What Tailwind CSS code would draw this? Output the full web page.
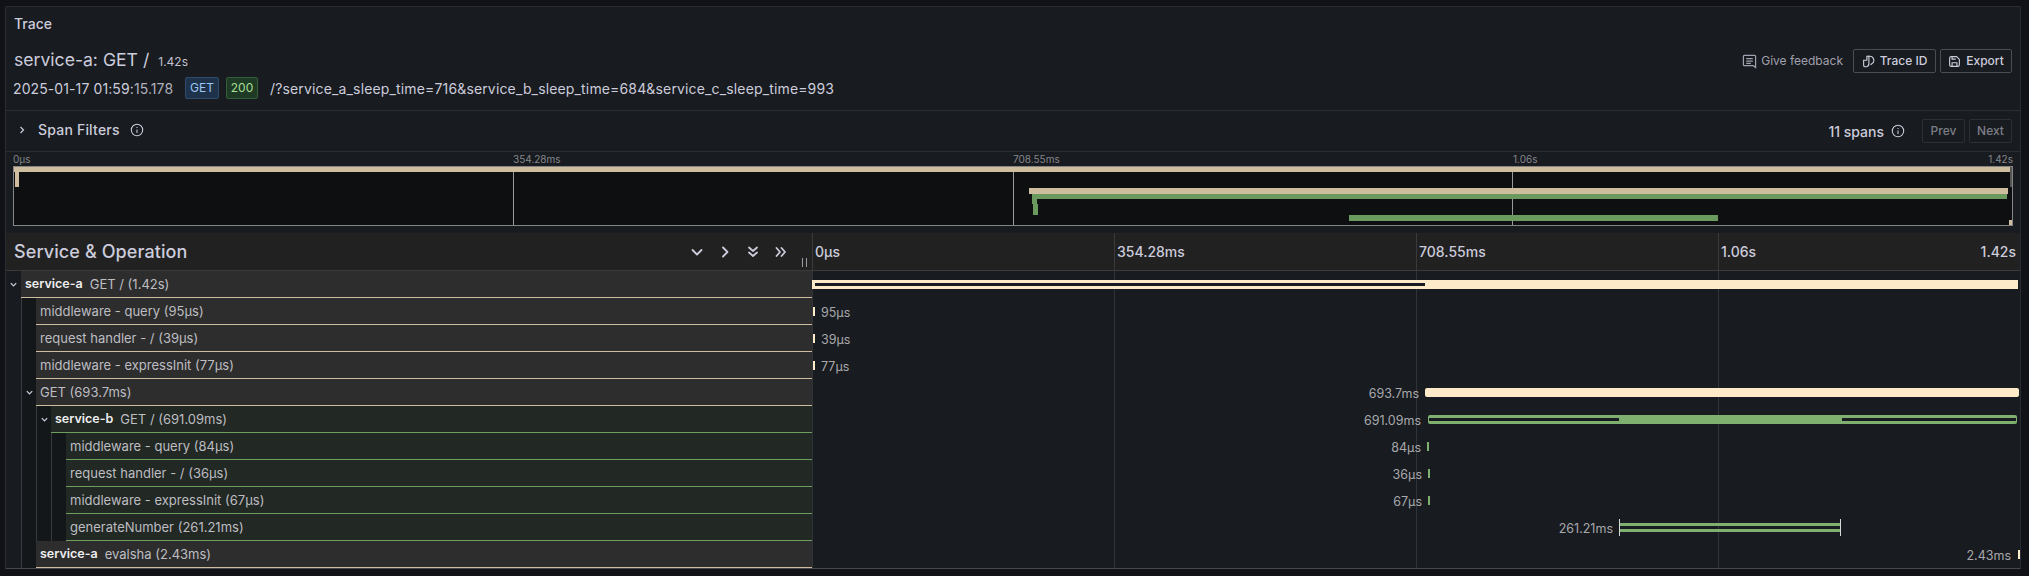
<!DOCTYPE html>
<html><head><meta charset="utf-8"><script src="https://cdn.jsdelivr.net/npm/@tailwindcss/browser@4"></script></head>
<body class="bg-[#111217] m-0 overflow-hidden">
<div class="w-[2029px] h-[576px] pt-[6px] pl-[5px] font-['Inter','Liberation_Sans',sans-serif] text-[#ccccdc]">
<div class="w-[2016px] bg-[#181b1f] border-t border-x border-[#2a2d31] rounded-t-[2px] flex flex-col">

  <div class="h-[33px] pl-[8px] flex items-center text-[14px] font-medium">Trace</div>

  <div class="h-[71px] relative border-b border-[#2a2d31]">
    <div class="flex items-baseline h-[28px] pt-[8px] pl-[8px] gap-[9px]"><span class="text-[17.6px] leading-[24px]">service-a: GET /</span><span class="text-[12px] text-[#c0c0cf]">1.42s</span></div>
    <div class="flex items-center h-[22px] mt-[9px] pl-[7px]">
      <span class="text-[14px] w-[172px] shrink-0 tracking-[0.1px]">2025-01-17 01:59:<span class="text-[#b0b0bc]">15.178</span></span>
      <span class="text-[12px] h-[22px] w-[34px] flex items-center justify-center bg-[#1e3349] border border-[#2f4c6e] text-[#9cc4f5] rounded-[2px]">GET</span>
      <span class="text-[12px] h-[22px] w-[32px] ml-[7px] flex items-center justify-center bg-[#1f3a24] border border-[#355f3a] text-[#a5df96] rounded-[2px]">200</span>
      <span class="text-[14px] ml-[12px] tracking-[0.15px]">/?service_a_sleep_time=716&amp;service_b_sleep_time=684&amp;service_c_sleep_time=993</span>
    </div>
    <div class="absolute right-[8px] top-[9px] flex items-center gap-[4px] text-[12px]">
      <span class="flex items-center gap-[4px] text-[#a0a0ae] mr-[6px]"><svg width="15" height="15" viewBox="0 0 16 16" fill="none" stroke="currentColor" stroke-width="1.3"><path d="M2.500 1.500h11a1 1 0 0 1 1 1v12l-2.500-2H2.500a1 1 0 0 1-1-1v-9a1 1 0 0 1 1-1z"/><path d="M4.500 5h7M4.500 7.500h7M4.500 10h5"/></svg>Give feedback</span>
      <span class="h-[24px] w-[83px] flex items-center justify-center gap-[5px] border border-[#4a4d53] rounded-[2px] font-medium"><svg width="13" height="13" viewBox="0 0 16 16" fill="none" stroke="currentColor" stroke-width="1.4"><path d="M7 1.500h2.500a5 5 0 0 1 3 9l-2 1.500"/><path d="M2 6.500h4v-5h2.500v9a4 4 0 0 1-3 4H4a2 2 0 0 1-2-2z"/></svg>Trace ID</span>
      <span class="h-[24px] w-[72px] flex items-center justify-center gap-[5px] border border-[#4a4d53] rounded-[2px] font-medium"><svg width="13" height="13" viewBox="0 0 16 16" fill="none" stroke="currentColor" stroke-width="1.4"><path d="M2 4a2 2 0 0 1 2-2h6.500L14 5.500V12a2 2 0 0 1-2 2H4a2 2 0 0 1-2-2z"/><path d="M5 14v-4.500h6V14M5 2v3h4.500"/></svg>Export</span>
    </div>
  </div>

  <div class="h-[41px] flex items-center pl-[11px] border-b border-[#2a2d31]">
    <div class="flex items-center pb-[3px]">
      <svg width="10" height="10" viewBox="0 0 10 10" fill="none" stroke="#ccccdc" stroke-width="1.200"><path d="M3.500 2l3 3-3 3"/></svg>
      <span class="ml-[11px] text-[14px] font-medium tracking-[0.2px]">Span Filters</span>
      <svg class="ml-[10px]" width="14" height="14" viewBox="0 0 16 16" fill="none" stroke="#ccccdc" stroke-width="1.200"><circle cx="8" cy="8" r="6.500"/><path d="M8 7.500v4M8 4.500v1.300"/></svg>
    </div>
    <div class="ml-auto mr-[8px] flex items-center">
      <span class="text-[14px] font-medium">11 spans</span>
      <svg class="ml-[7px] mr-[17px]" width="14" height="14" viewBox="0 0 16 16" fill="none" stroke="#ccccdc" stroke-width="1.200"><circle cx="8" cy="8" r="6.500"/><path d="M8 7.500v4M8 4.500v1.300"/></svg>
      <span class="h-[24px] w-[43px] flex items-center justify-center border border-[#2c2f34] rounded-[2px] text-[12px] font-medium text-[#7d7f87]">Prev</span>
      <span class="h-[24px] w-[43px] ml-[4px] flex items-center justify-center border border-[#2c2f34] rounded-[2px] text-[12px] font-medium text-[#7d7f87]">Next</span>
    </div>
  </div>

  <div class="h-[81px] px-[7px]">
    <div class="h-[14px] grid grid-cols-4 text-[10px] leading-[15px] text-[#85878d]">
      <span>0µs</span><span>354.28ms</span><span>708.55ms</span><span class="flex justify-between"><span>1.06s</span><span>1.42s</span></span>
    </div>
    <div class="h-[60px] relative border border-[#858585] bg-[#0e0f10]">
      <div class="absolute top-0 bottom-0 left-0 right-[1px] grid grid-cols-4">
        <div></div><div class="border-l border-[#9a9a9a]"></div><div class="border-l border-[#9a9a9a]"></div><div class="border-l border-[#9a9a9a]"></div>
      </div>
      <div class="absolute left-0 top-0 w-[1996px] h-[5px] bg-[#cfbd9f]"></div>
      <div class="absolute left-[1px] top-[5px] w-[4px] h-[15px] bg-[#cfbd9f]"></div>
      <div class="absolute left-[1996px] top-0 w-[2px] h-[20px] bg-[#555555]"></div>
      <div class="absolute left-[1015px] top-[21px] w-[979px] h-[6px] bg-[#cfbd9f]"></div>
      <div class="absolute left-[1018px] top-[27px] w-[975px] h-[5px] bg-[#6a9a5d]"></div>
      <div class="absolute left-[1018px] top-[32px] w-[5px] h-[5px] bg-[#6a9a5d]"></div>
      <div class="absolute left-[1019px] top-[37px] w-[5px] h-[11px] bg-[#6a9a5d]"></div>
      <div class="absolute left-[1335px] top-[48px] w-[369px] h-[6px] bg-[#6a9a5d]"></div>
      <div class="absolute left-[1995px] top-[53px] w-[3px] h-[5px] bg-[#cfbd9f]"></div>
    </div>
  </div>

  <div class="relative border-b border-[#44474b]">
    <div class="flex h-[38px] bg-[#212121] border-b border-[#3a3a3a]">
      <div class="w-[806px] shrink-0 relative flex items-center pl-[8px] text-[18px] tracking-[0.1px] font-medium">
        <span>Service &amp; Operation</span>
        <div class="ml-auto mr-[24px] flex items-center gap-[14px]">
          <svg width="14" height="14" viewBox="0 0 14 14" fill="none" stroke="#ccccdc" stroke-width="1.800" stroke-linecap="round" stroke-linejoin="round"><path d="M2.500 5l4.500 4.500L11.500 5"/></svg>
          <svg width="14" height="14" viewBox="0 0 14 14" fill="none" stroke="#ccccdc" stroke-width="1.800" stroke-linecap="round" stroke-linejoin="round"><path d="M5 2.500l4.500 4.500L5 11.500"/></svg>
          <svg width="14" height="14" viewBox="0 0 14 14" fill="none" stroke="#ccccdc" stroke-width="1.800" stroke-linecap="round" stroke-linejoin="round"><path d="M3 2.500l4 3.500 4-3.500M3 7.500l4 3.500 4-3.500"/></svg>
          <svg width="14" height="14" viewBox="0 0 14 14" fill="none" stroke="#ccccdc" stroke-width="1.800" stroke-linecap="round" stroke-linejoin="round"><path d="M2.500 3l3.500 4-3.500 4M7.500 3l3.500 4-3.500 4"/></svg>
        </div>
        <div class="absolute left-[796px] top-[25px] w-[5px] h-[9px] border-x border-[#9a9aa0]"></div>
      </div>
      <div class="flex-1 grid grid-cols-4 text-[14px] font-medium">
        <div class="border-l border-[#3a3a3a] flex items-center pl-[2px]">0µs</div>
        <div class="border-l border-[#3a3a3a] flex items-center pl-[2px]">354.28ms</div>
        <div class="border-l border-[#3a3a3a] flex items-center pl-[2px]">708.55ms</div>
        <div class="border-l border-[#3a3a3a] flex items-center justify-between pl-[2px] pr-[4px]"><span>1.06s</span><span>1.42s</span></div>
      </div>
    </div>

    <div class="relative text-[13px]">
      <div class="absolute left-[806px] right-0 top-0 bottom-0 grid grid-cols-4">
        <div class="border-l border-[#303338]"></div><div class="border-l border-[#303338]"></div><div class="border-l border-[#303338]"></div><div class="border-l border-[#303338]"></div>
      </div>

      <!-- row 1 -->
      <div class="flex h-[27px] relative">
        <div class="w-[806px] flex shrink-0">
          <div class="w-[15px] flex items-center justify-center"><svg width="9" height="9" viewBox="0 0 10 10" fill="none" stroke="#ccccdc" stroke-width="1.400"><path d="M2 3.500l3 3 3-3"/></svg></div>
          <div class="flex-1 flex items-center pl-[4px] pt-[1px] bg-[#2d2d2d] border-b border-[#cfbd9f] text-[#bdbdc2]"><b class="font-semibold text-[12.5px] text-[#eeeef0] mr-[7px]">service-a</b>GET / (1.42s)</div>
        </div>
        <div class="flex-1 relative">
          <div class="absolute left-0 top-[9px] w-[613px] h-[9px] bg-[#fdeac9]"></div>
          <div class="absolute left-[3px] top-[12px] w-[610px] h-[3px] bg-[#181b1f]"></div>
          <div class="absolute left-[613px] top-[9px] w-[593px] h-[9px] bg-[#fdeac9]"></div>
        </div>
      </div>

      <!-- row 2 -->
      <div class="flex h-[27px]">
        <div class="w-[806px] flex shrink-0">
          <div class="w-[15px]"></div><div class="w-[15px] border-l border-[#3a3d40] bg-[#14171a]"></div>
          <div class="flex-1 flex items-center pl-[4px] pt-[1px] bg-[#2d2d2d] border-b border-[#cfbd9f] text-[#bdbdc2]">middleware - query (95µs)</div>
        </div>
        <div class="flex-1 flex items-center relative pl-[9px] pt-[3px] text-[12.5px] text-[#a8a8ac]"><div class="absolute left-[1px] top-[9px] w-[2px] h-[9px] bg-[#fdeac9]"></div>95µs</div>
      </div>

      <!-- row 3 -->
      <div class="flex h-[27px]">
        <div class="w-[806px] flex shrink-0">
          <div class="w-[15px]"></div><div class="w-[15px] border-l border-[#3a3d40] bg-[#14171a]"></div>
          <div class="flex-1 flex items-center pl-[4px] pt-[1px] bg-[#2d2d2d] border-b border-[#cfbd9f] text-[#bdbdc2]">request handler - / (39µs)</div>
        </div>
        <div class="flex-1 flex items-center relative pl-[9px] pt-[3px] text-[12.5px] text-[#a8a8ac]"><div class="absolute left-[1px] top-[9px] w-[2px] h-[9px] bg-[#fdeac9]"></div>39µs</div>
      </div>

      <!-- row 4 -->
      <div class="flex h-[27px]">
        <div class="w-[806px] flex shrink-0">
          <div class="w-[15px]"></div><div class="w-[15px] border-l border-[#3a3d40] bg-[#14171a]"></div>
          <div class="flex-1 flex items-center pl-[4px] pt-[1px] bg-[#2d2d2d] border-b border-[#cfbd9f] text-[#bdbdc2]">middleware - expressInit (77µs)</div>
        </div>
        <div class="flex-1 flex items-center relative pl-[9px] pt-[3px] text-[12.5px] text-[#a8a8ac]"><div class="absolute left-[1px] top-[9px] w-[2px] h-[9px] bg-[#fdeac9]"></div>77µs</div>
      </div>

      <!-- row 5 -->
      <div class="flex h-[27px]">
        <div class="w-[806px] flex shrink-0">
          <div class="w-[15px]"></div><div class="w-[15px] border-l border-[#3a3d40] bg-[#14171a] flex items-center justify-center"><svg width="9" height="9" viewBox="0 0 10 10" fill="none" stroke="#ccccdc" stroke-width="1.400"><path d="M2 3.500l3 3 3-3"/></svg></div>
          <div class="flex-1 flex items-center pl-[4px] pt-[1px] bg-[#2d2d2d] border-b border-[#cfbd9f] text-[#bdbdc2]">GET (693.7ms)</div>
        </div>
        <div class="flex-1 flex items-center relative text-[12.5px] text-[#a8a8ac] pt-[3px]">
          <span class="absolute right-[601px]">693.7ms</span>
          <div class="absolute left-[613px] top-[9px] w-[594px] h-[9px] bg-[#fdeac9] rounded-[2px]"></div>
        </div>
      </div>

      <!-- row 6 -->
      <div class="flex h-[27px]">
        <div class="w-[806px] flex shrink-0">
          <div class="w-[15px]"></div><div class="w-[15px] border-l border-[#3a3d40] bg-[#14171a]"></div><div class="w-[15px] border-l border-[#3a3d40] bg-[#14171a] flex items-center justify-center"><svg width="9" height="9" viewBox="0 0 10 10" fill="none" stroke="#ccccdc" stroke-width="1.400"><path d="M2 3.500l3 3 3-3"/></svg></div>
          <div class="flex-1 flex items-center pl-[4px] pt-[1px] bg-[#222823] border-b border-[#6d9f5e] text-[#bdbdc2]"><b class="font-semibold text-[12.5px] text-[#eeeef0] mr-[7px]">service-b</b>GET / (691.09ms)</div>
        </div>
        <div class="flex-1 flex items-center relative text-[12.5px] text-[#a8a8ac] pt-[3px]">
          <span class="absolute right-[599px]">691.09ms</span>
          <div class="absolute left-[616px] top-[9px] w-[589px] h-[9px] bg-[#80b06f] rounded-[2px]"></div>
          <div class="absolute left-[617px] top-[12px] w-[190px] h-[3px] bg-[#181b1f]"></div>
          <div class="absolute left-[1030px] top-[12px] w-[174px] h-[3px] bg-[#181b1f]"></div>
        </div>
      </div>

      <!-- row 7 -->
      <div class="flex h-[27px]">
        <div class="w-[806px] flex shrink-0">
          <div class="w-[15px]"></div><div class="w-[15px] border-l border-[#3a3d40] bg-[#14171a]"></div><div class="w-[15px] border-l border-[#3a3d40] bg-[#14171a]"></div><div class="w-[15px] border-l border-[#3a3d40] bg-[#14171a]"></div>
          <div class="flex-1 flex items-center pl-[4px] pt-[1px] bg-[#222823] border-b border-[#6d9f5e] text-[#bdbdc2]">middleware - query (84µs)</div>
        </div>
        <div class="flex-1 flex items-center relative text-[12.5px] text-[#a8a8ac] pt-[3px]">
          <span class="absolute right-[599px]">84µs</span>
          <div class="absolute left-[615px] top-[9px] w-[2px] h-[9px] bg-[#80b06f]"></div>
        </div>
      </div>

      <!-- row 8 -->
      <div class="flex h-[27px]">
        <div class="w-[806px] flex shrink-0">
          <div class="w-[15px]"></div><div class="w-[15px] border-l border-[#3a3d40] bg-[#14171a]"></div><div class="w-[15px] border-l border-[#3a3d40] bg-[#14171a]"></div><div class="w-[15px] border-l border-[#3a3d40] bg-[#14171a]"></div>
          <div class="flex-1 flex items-center pl-[4px] pt-[1px] bg-[#222823] border-b border-[#6d9f5e] text-[#bdbdc2]">request handler - / (36µs)</div>
        </div>
        <div class="flex-1 flex items-center relative text-[12.5px] text-[#a8a8ac] pt-[3px]">
          <span class="absolute right-[598px]">36µs</span>
          <div class="absolute left-[616px] top-[9px] w-[2px] h-[9px] bg-[#80b06f]"></div>
        </div>
      </div>

      <!-- row 9 -->
      <div class="flex h-[27px]">
        <div class="w-[806px] flex shrink-0">
          <div class="w-[15px]"></div><div class="w-[15px] border-l border-[#3a3d40] bg-[#14171a]"></div><div class="w-[15px] border-l border-[#3a3d40] bg-[#14171a]"></div><div class="w-[15px] border-l border-[#3a3d40] bg-[#14171a]"></div>
          <div class="flex-1 flex items-center pl-[4px] pt-[1px] bg-[#222823] border-b border-[#6d9f5e] text-[#bdbdc2]">middleware - expressInit (67µs)</div>
        </div>
        <div class="flex-1 flex items-center relative text-[12.5px] text-[#a8a8ac] pt-[3px]">
          <span class="absolute right-[598px]">67µs</span>
          <div class="absolute left-[616px] top-[9px] w-[2px] h-[9px] bg-[#80b06f]"></div>
        </div>
      </div>

      <!-- row 10 -->
      <div class="flex h-[27px]">
        <div class="w-[806px] flex shrink-0">
          <div class="w-[15px]"></div><div class="w-[15px] border-l border-[#3a3d40] bg-[#14171a]"></div><div class="w-[15px] border-l border-[#3a3d40] bg-[#14171a]"></div><div class="w-[15px] border-l border-[#3a3d40] bg-[#14171a]"></div>
          <div class="flex-1 flex items-center pl-[4px] pt-[1px] bg-[#222823] border-b border-[#6d9f5e] text-[#bdbdc2]">generateNumber (261.21ms)</div>
        </div>
        <div class="flex-1 flex items-center relative text-[12.5px] text-[#a8a8ac] pt-[3px]">
          <span class="absolute right-[407px]">261.21ms</span>
          <div class="absolute left-[807px] top-[9px] w-[222px] h-[3px] bg-[#80b06f]"></div>
          <div class="absolute left-[807px] top-[15px] w-[222px] h-[3px] bg-[#80b06f]"></div>
          <div class="absolute left-[807px] top-[5px] w-[222px] h-[17px] border-x border-[#d8d8d8]"></div>
        </div>
      </div>

      <!-- row 11 -->
      <div class="flex h-[27px]">
        <div class="w-[806px] flex shrink-0">
          <div class="w-[15px]"></div><div class="w-[15px] border-l border-[#3a3d40] bg-[#14171a]"></div>
          <div class="flex-1 flex items-center pl-[4px] pt-[1px] bg-[#2d2d2d] border-b border-[#cfbd9f] text-[#bdbdc2]"><b class="font-semibold text-[12.5px] text-[#eeeef0] mr-[7px]">service-a</b>evalsha (2.43ms)</div>
        </div>
        <div class="flex-1 flex items-center relative text-[12.5px] text-[#a8a8ac] pt-[3px]">
          <span class="absolute right-[9px]">2.43ms</span>
          <div class="absolute left-[1206px] top-[9px] w-[2px] h-[9px] bg-[#fdeac9]"></div>
        </div>
      </div>
    </div>
  </div>
</div>
</div>
</body></html>
